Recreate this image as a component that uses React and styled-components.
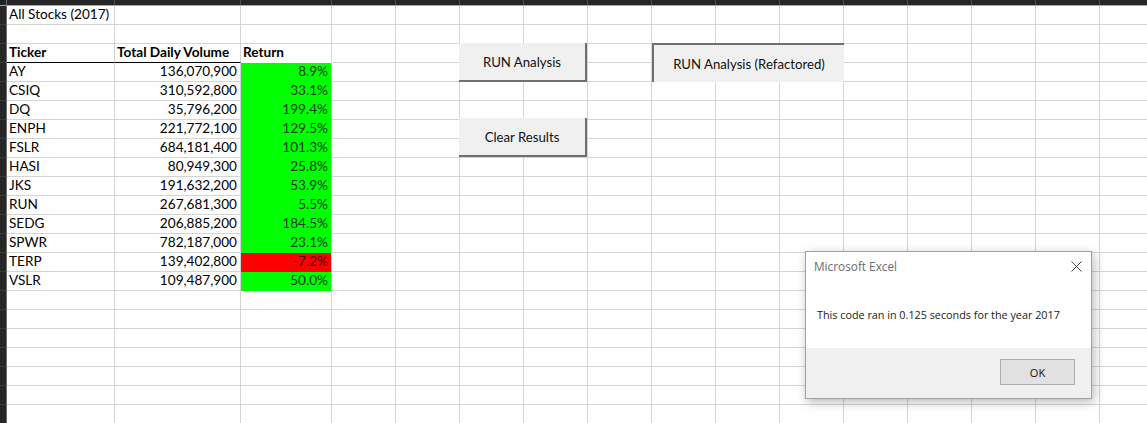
import React from 'react';
import styled, { createGlobalStyle } from 'styled-components';

const Global = createGlobalStyle`
  html, body { margin: 0; padding: 0; background: #fff; overflow: hidden; }
  #root { width: 1147px; height: 423px; }
`;

const COLS = '108px 126px 91px repeat(13, 64px)';
const ROW_H = 19;
const ROWS = 22;

const Window = styled.div`
  position: relative;
  width: 1147px;
  height: 423px;
  overflow: hidden;
  display: grid;
  grid-template-columns: 7px 1fr;
  grid-template-rows: 6px 1fr;
  background: #fff;
  font-family: Lato, "Liberation Sans", sans-serif;
`;

const Corner = styled.div`
  box-sizing: border-box;
  background: #232323;
  border-right: 1px solid #6e6e6e;
  border-bottom: 1px solid #a6a6a6;
`;

const ColHeaders = styled.div`
  box-sizing: border-box;
  display: grid;
  grid-template-columns: ${COLS};
  background: #262626;
  border-bottom: 1px solid #a6a6a6;
  overflow: hidden;
`;

const ColHead = styled.div`
  border-right: 1px solid #4c4c4c;
`;

const RowHeaders = styled.div`
  box-sizing: border-box;
  display: grid;
  grid-auto-rows: ${ROW_H}px;
  align-content: start;
  background: #262626;
  border-right: 1px solid #6e6e6e;
  overflow: hidden;
`;

const RowHead = styled.div`
  box-sizing: border-box;
  border-bottom: 1px solid #3a3a3a;
`;

const Sheet = styled.div`
  display: grid;
  grid-template-columns: ${COLS};
  grid-auto-rows: ${ROW_H}px;
  align-content: start;
  overflow: hidden;
`;

const Cell = styled.div`
  box-sizing: border-box;
  border-right: 1px solid #d4d4d4;
  border-bottom: 1px solid ${(p) => p.$under || (p.$fill ? 'transparent' : '#d4d4d4')};
  background: ${(p) => p.$fill || 'transparent'};
  display: flex;
  align-items: flex-end;
  justify-content: ${(p) => (p.$right ? 'flex-end' : 'flex-start')};
  padding: 0 3px 2px 2px;
  font-size: 13.6px;
  line-height: 15px;
  font-weight: ${(p) => (p.$bold ? 700 : 400)};
  color: ${(p) => p.$ink || '#000'};
  white-space: nowrap;
`;

const SheetButton = styled.button`
  position: absolute;
  left: ${(p) => p.$x}px;
  top: ${(p) => p.$y}px;
  width: ${(p) => p.$w}px;
  height: 39px;
  box-sizing: border-box;
  margin: 0;
  padding: 0;
  background: #f0f0f0;
  border: 0;
  ${(p) =>
    p.$pressed
      ? 'border-top: 2px solid #6f6f6f; border-left: 2px solid #6f6f6f;'
      : 'border-right: 2px solid #6f6f6f; border-bottom: 2px solid #6f6f6f;'}
  font-family: Lato, "Liberation Sans", sans-serif;
  font-size: 13.2px;
  color: #111;
  display: flex;
  align-items: center;
  justify-content: center;
`;

const Dialog = styled.div`
  position: absolute;
  left: 805px;
  top: 251px;
  width: 287px;
  height: 148px;
  box-sizing: border-box;
  border: 1px solid #a0a0a0;
  background: #fff;
  box-shadow: 2px 3px 10px rgba(0, 0, 0, 0.28);
  display: flex;
  flex-direction: column;
  font-family: "Open Sans", "Noto Sans", sans-serif;
`;

const TitleBar = styled.div`
  height: 28px;
  display: flex;
  align-items: center;
  justify-content: space-between;
  padding: 0 9px 0 8px;
  font-size: 11.8px;
  color: #6d6d6d;
`;

const CloseIcon = styled.svg`
  width: 11px;
  height: 11px;
  margin-top: 1px;
`;

const Message = styled.div`
  flex: 1;
  display: flex;
  align-items: center;
  padding: 0 0 0 11px;
  font-size: 10.8px;
  color: #1a1a1a;
`;

const Footer = styled.div`
  height: 50px;
  background: #f0f0f0;
  display: flex;
  align-items: flex-start;
  justify-content: flex-end;
  padding: 11px 16px 0 0;
  box-sizing: border-box;
`;

const OkButton = styled.button`
  width: 75px;
  height: 26px;
  box-sizing: border-box;
  background: #e1e1e1;
  border: 1px solid #adadad;
  font-family: "Open Sans", "Noto Sans", sans-serif;
  font-size: 11px;
  color: #111;
  padding: 0;
`;

const DATA = [
  ['AY', '136,070,900', '8.9%', false],
  ['CSIQ', '310,592,800', '33.1%', false],
  ['DQ', '35,796,200', '199.4%', false],
  ['ENPH', '221,772,100', '129.5%', false],
  ['FSLR', '684,181,400', '101.3%', false],
  ['HASI', '80,949,300', '25.8%', false],
  ['JKS', '191,632,200', '53.9%', false],
  ['RUN', '267,681,300', '5.5%', false],
  ['SEDG', '206,885,200', '184.5%', false],
  ['SPWR', '782,187,000', '23.1%', false],
  ['TERP', '139,402,800', '-7.2%', true],
  ['VSLR', '109,487,900', '50.0%', false],
];

const EXTRA = 13;

function BlankCells({ n }) {
  return Array.from({ length: n }, (_, i) => <Cell key={i} />);
}

export default function App() {
  const rows = [];
  rows.push(
    <React.Fragment key="r1">
      <Cell>All Stocks (2017)</Cell>
      <Cell />
      <Cell />
      <BlankCells n={EXTRA} />
    </React.Fragment>
  );
  rows.push(
    <React.Fragment key="r2">
      <BlankCells n={3 + EXTRA} />
    </React.Fragment>
  );
  rows.push(
    <React.Fragment key="r3">
      <Cell $bold $under="#000">Ticker</Cell>
      <Cell $bold $under="#000">Total Daily Volume</Cell>
      <Cell $bold $under="transparent">Return</Cell>
      <BlankCells n={EXTRA} />
    </React.Fragment>
  );
  DATA.forEach(([t, v, r, neg]) => {
    rows.push(
      <React.Fragment key={t}>
        <Cell>{t}</Cell>
        <Cell $right>{v}</Cell>
        <Cell $right $fill={neg ? '#ff0000' : '#00ff00'} $ink={neg ? '#3a0000' : '#12381a'}>
          {r}
        </Cell>
        <BlankCells n={EXTRA} />
      </React.Fragment>
    );
  });
  for (let i = rows.length; i < ROWS; i++) {
    rows.push(
      <React.Fragment key={'b' + i}>
        <BlankCells n={3 + EXTRA} />
      </React.Fragment>
    );
  }

  return (
    <>
      <Global />
      <Window>
        <Corner />
        <ColHeaders>
          {Array.from({ length: 16 }, (_, i) => (
            <ColHead key={i} />
          ))}
        </ColHeaders>
        <RowHeaders>
          {Array.from({ length: ROWS }, (_, i) => (
            <RowHead key={i} />
          ))}
        </RowHeaders>
        <Sheet>{rows}</Sheet>

        <SheetButton $x={459} $y={43} $w={128}>RUN Analysis</SheetButton>
        <SheetButton $x={459} $y={118} $w={128}>Clear Results</SheetButton>
        <SheetButton $x={652} $y={43} $w={192} $pressed>
          RUN Analysis (Refactored)
        </SheetButton>

        <Dialog>
          <TitleBar>
            <span>Microsoft Excel</span>
            <CloseIcon viewBox="0 0 11 11">
              <path d="M0.5 0.5 L10.5 10.5 M10.5 0.5 L0.5 10.5" stroke="#444" strokeWidth="1" fill="none" />
            </CloseIcon>
          </TitleBar>
          <Message>This code ran in 0.125 seconds for the year 2017</Message>
          <Footer>
            <OkButton>OK</OkButton>
          </Footer>
        </Dialog>
      </Window>
    </>
  );
}
